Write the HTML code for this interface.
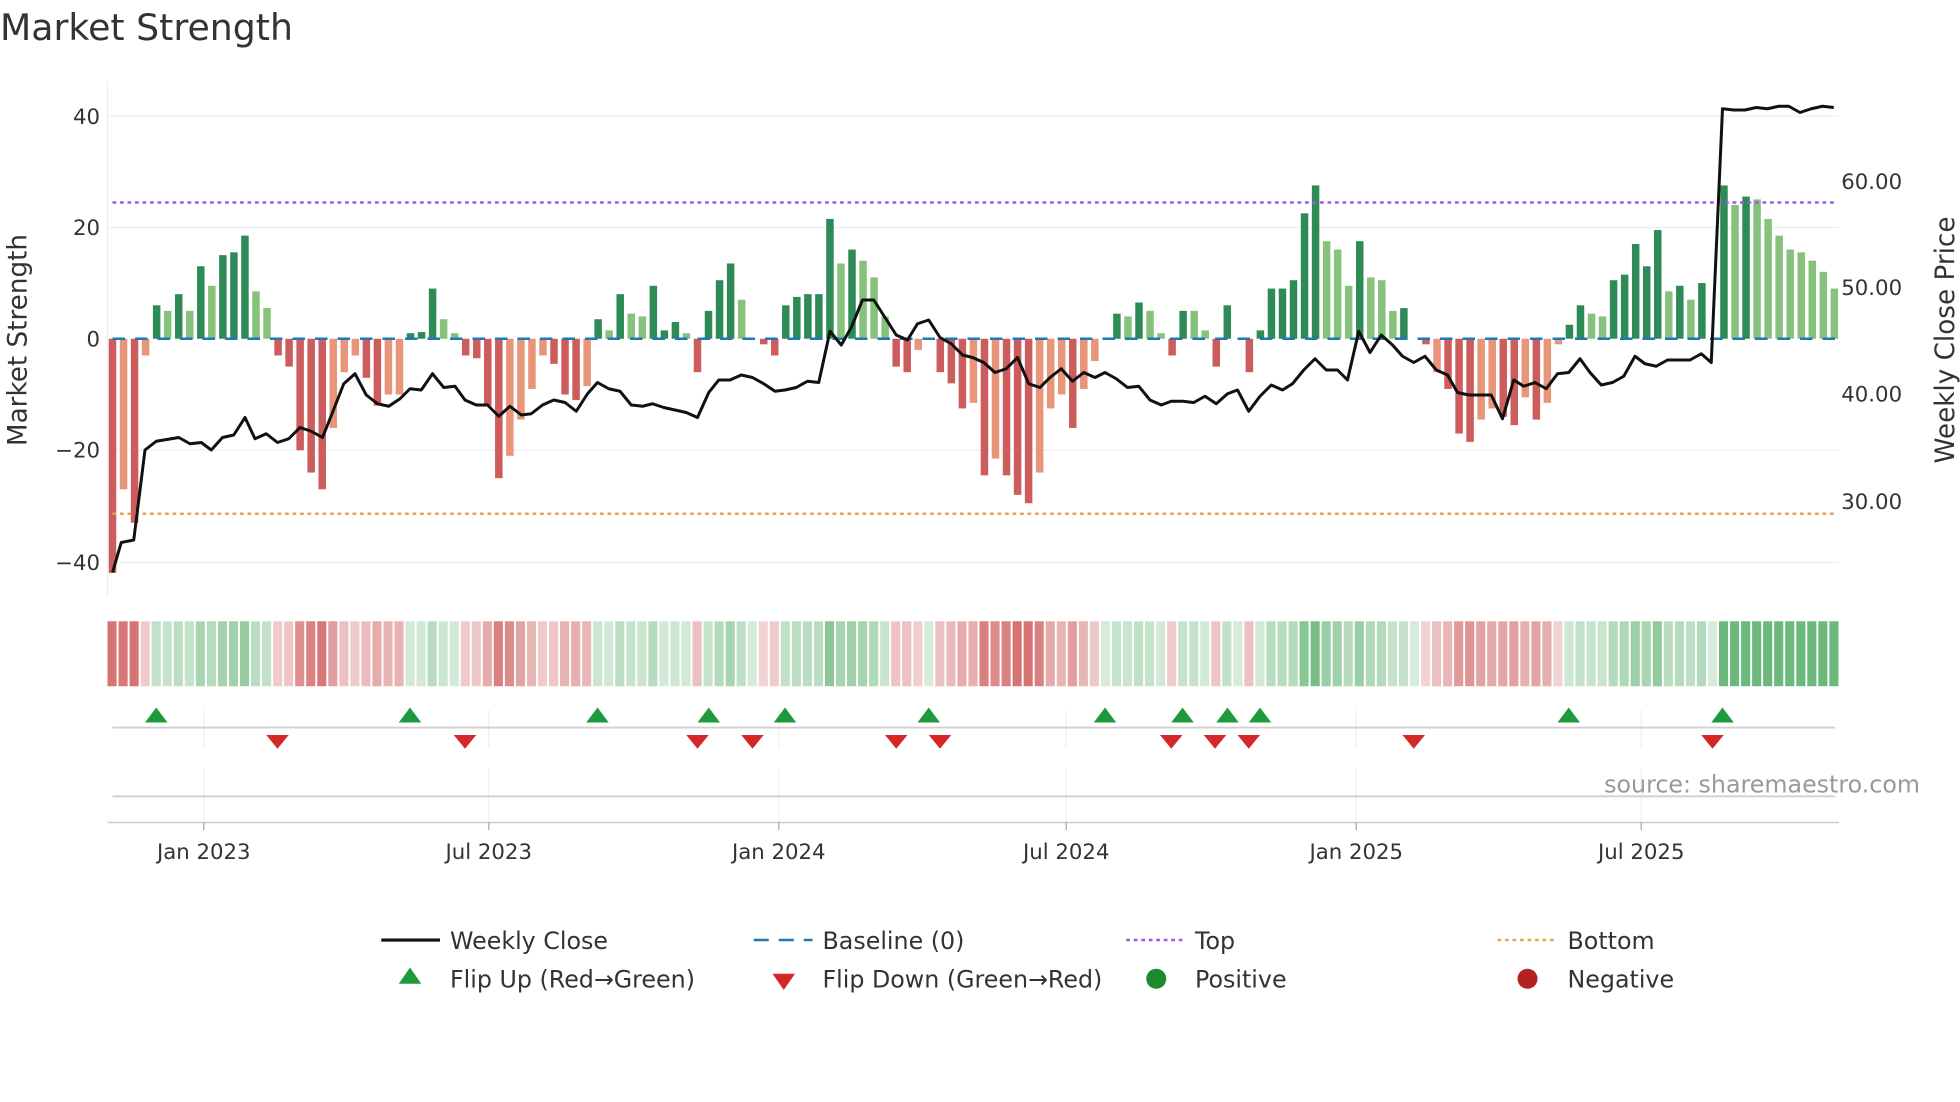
<!DOCTYPE html>
<html><head><meta charset="utf-8"><style>
html,body{margin:0;padding:0;background:#fff;}
svg{display:block;font-family:"DejaVu Sans","Liberation Sans",sans-serif;}
</style></head><body>
<svg id="s" width="1960" height="1102" viewBox="0 0 1568 881.6" xmlns="http://www.w3.org/2000/svg">
<rect width="1568" height="882" fill="#fff"/>
<text x="0" y="32" font-size="29" fill="#333">Market Strength</text>
<g stroke="#eceff2" stroke-width="1">
<line x1="86" x2="1471" y1="93" y2="93"/><line x1="86" x2="1471" y1="182" y2="182"/>
<line x1="86" x2="1471" y1="360" y2="360"/><line x1="86" x2="1471" y1="450" y2="450"/>
<line x1="86" x2="86" y1="65" y2="478"/>
</g>
<g font-size="17" fill="#333" text-anchor="end">
<text x="80" y="99">40</text><text x="80" y="188">20</text><text x="80" y="277">0</text>
<text x="80" y="366">−20</text><text x="80" y="456">−40</text>
</g>
<g font-size="17" fill="#333">
<text x="1473" y="151">60.00</text><text x="1473" y="236">50.00</text>
<text x="1473" y="321">40.00</text><text x="1473" y="407">30.00</text>
</g>
<text transform="translate(21,272) rotate(-90)" font-size="21" fill="#333" text-anchor="middle">Market Strength</text>
<text transform="translate(1563,272) rotate(-90)" font-size="21" fill="#333" text-anchor="middle">Weekly Close Price</text>
<g id="bars"></g>
<line x1="90" x2="1470" y1="271" y2="271" stroke="#1f77b4" stroke-width="2" stroke-dasharray="10,8"/>
<line x1="90" x2="1470" y1="162" y2="162" stroke="#9b5de5" stroke-width="2" stroke-dasharray="3,3"/>
<line x1="90" x2="1470" y1="411" y2="411" stroke="#f0a050" stroke-width="2" stroke-dasharray="3,3"/>
<polyline id="price" fill="none" stroke="#111" stroke-width="2.4" stroke-linejoin="round"/>
<g id="strip"></g>
<g stroke="#eef0f2" stroke-width="1">
<line x1="163" x2="163" y1="568" y2="598"/><line x1="391" x2="391" y1="568" y2="598"/>
<line x1="623" x2="623" y1="568" y2="598"/><line x1="853" x2="853" y1="568" y2="598"/>
<line x1="1085" x2="1085" y1="568" y2="598"/><line x1="1313" x2="1313" y1="568" y2="598"/>
<line x1="163" x2="163" y1="615" y2="658"/><line x1="391" x2="391" y1="615" y2="658"/>
<line x1="623" x2="623" y1="615" y2="658"/><line x1="853" x2="853" y1="615" y2="658"/>
<line x1="1085" x2="1085" y1="615" y2="658"/><line x1="1313" x2="1313" y1="615" y2="658"/>
</g>
<line x1="90" x2="1468" y1="582" y2="582" stroke="#d0d0d0" stroke-width="1.5"/>
<line x1="90" x2="1468" y1="637" y2="637" stroke="#d0d0d0" stroke-width="1.5"/>
<line x1="86" x2="1471" y1="658" y2="658" stroke="#ccc" stroke-width="1.2"/>
<g id="flips"></g>
<text x="1536" y="634" font-size="19" fill="#999" text-anchor="end">source: sharemaestro.com</text>
<g stroke="#aaa"><line x1="163" x2="163" y1="658" y2="664"/><line x1="391" x2="391" y1="658" y2="664"/><line x1="623" x2="623" y1="658" y2="664"/><line x1="853" x2="853" y1="658" y2="664"/><line x1="1085" x2="1085" y1="658" y2="664"/><line x1="1313" x2="1313" y1="658" y2="664"/></g>
<g font-size="17" fill="#333" text-anchor="middle">
<text x="163" y="687">Jan 2023</text><text x="391" y="687">Jul 2023</text><text x="623" y="687">Jan 2024</text>
<text x="853" y="687">Jul 2024</text><text x="1085" y="687">Jan 2025</text><text x="1313" y="687">Jul 2025</text>
</g>
<g font-size="19" fill="#333">
<line x1="305" x2="352" y1="752" y2="752" stroke="#111" stroke-width="2.5"/>
<text x="360" y="759">Weekly Close</text>
<line x1="603" x2="650" y1="752" y2="752" stroke="#1f77b4" stroke-width="2" stroke-dasharray="12,8"/>
<text x="658" y="759">Baseline (0)</text>
<line x1="901" x2="946" y1="752" y2="752" stroke="#9b5de5" stroke-width="2" stroke-dasharray="3,3"/>
<text x="956" y="759">Top</text>
<line x1="1198" x2="1244" y1="752" y2="752" stroke="#f0a050" stroke-width="2" stroke-dasharray="3,3"/>
<text x="1254" y="759">Bottom</text>
<polygon points="328,774 319,787 337,787" fill="#1e9a3e"/>
<text x="360" y="790">Flip Up (Red→Green)</text>
<polygon points="618,779 636,779 627,792" fill="#d62728"/>
<text x="658" y="790">Flip Down (Green→Red)</text>
<circle cx="925" cy="783" r="8" fill="#1e8a2e"/>
<text x="956" y="790">Positive</text>
<circle cx="1222" cy="783" r="8" fill="#b22222"/>
<text x="1254" y="790">Negative</text>
</g>
</svg>
<script>
var NS="http://www.w3.org/2000/svg";
var V=[-42,-27,-33,-3,6,5,8,5,13,9.5,15,15.5,18.5,8.5,5.5,-3,-5,-20,-24,-27,-16,-6,-3,-7,-12,-10,-10,1,1.2,9,3.5,1,-3,-3.5,-12,-25,-21,-14.5,-9,-3,-4.5,-10,-11,-8.5,3.5,1.5,8,4.5,4,9.5,1.5,3,1,-6,5,10.5,13.5,7,0,-1,-3,6,7.5,8,8,21.5,13.5,16,14,11,4,-5,-6,-2,0,-6,-8,-12.5,-11.5,-24.5,-21.5,-24.5,-28,-29.5,-24,-12.5,-10,-16,-9,-4,0,4.5,4,6.5,5,1,-3,5,5,1.5,-5,6,0,-6,1.5,9,9,10.5,22.5,27.5,17.5,16,9.5,17.5,11,10.5,5,5.5,0,-1,-6,-9,-17,-18.5,-14.5,-12.5,-14,-15.5,-10.5,-14.5,-11.5,-1,2.5,6,4.5,4,10.5,11.5,17,13,19.5,8.5,9.5,7,10,0,27.5,24,25.5,25,21.5,18.5,16,15.5,14,12,9];
var LT=[1,3,5,7,9,13,14,20,21,22,25,26,30,31,36,37,38,39,43,45,47,48,52,57,66,68,69,70,73,78,80,84,85,86,88,89,92,94,95,98,99,110,111,112,114,115,116,120,124,125,128,130,131,134,135,141,143,147,149,150,151,152,153,154,155,156];
function el(t,a,p){var e=document.createElementNS(NS,t);for(var k in a)e.setAttribute(k,a[k]);p.appendChild(e);return e;}
var bars=document.getElementById("bars"),strip=document.getElementById("strip");
for(var i=0;i<V.length;i++){var x=90+i*8.83,v=V[i],lt=LT.indexOf(i)>=0;
 var c=v>=0?(lt?"#86c27c":"#2e8b57"):(lt?"#e8957a":"#cd5c5c");
 if(v!==0){var y=271-v*4.46;el("rect",{x:x-3,y:Math.min(y,271),width:6,height:Math.abs(v*4.46),fill:c},bars);}
 var a=Math.min(1,0.3+Math.abs(v)/40);var sc=v>=0?"rgba(60,160,80,"+(a*0.7)+")":"rgba(200,70,70,"+(a*0.75)+")";
 if(i>=146) sc="rgba(60,160,80,0.75)";
 el("rect",{x:86+i*8.83,y:497,width:7.3,height:52,fill:sc},strip);}
var P=[[90,458],[97,434],[107,432],[116,360],[125,353],[143,350],[152,355],[161,354],[169,360],[178,350],[187,348],[196,334],[204,351],[213,347],[222,354],[231,351],[240,342],[249,345],[258,350],[266,330],[275,307],[284,299],[293,316],[302,323],[311,325],[320,319],[328,311],[337,312],[346,299],[355,310],[364,309],[372,320],[381,324],[390,324],[399,333],[408,325],[417,332],[425,331],[434,324],[443,320],[452,322],[461,329],[470,315],[478,306],[487,311],[496,313],[505,324],[514,325],[522,323],[531,326],[540,328],[549,330],[558,334],[567,314],[575,304],[584,304],[593,300],[602,302],[611,307],[620,313],[628,312],[637,310],[646,305],[655,306],[664,265],[673,276],[681,262],[690,240],[699,240],[708,254],[717,268],[726,272],[734,259],[743,256],[752,270],[761,275],[770,284],[778,286],[787,290],[796,298],[805,295],[814,286],[823,307],[832,310],[840,302],[849,295],[858,305],[867,298],[876,302],[884,298],[893,303],[902,310],[911,309],[920,320],[929,324],[937,321],[946,321],[955,322],[964,317],[973,323],[982,315],[990,312],[999,329],[1008,317],[1017,308],[1026,312],[1034,307],[1043,296],[1052,287],[1061,296],[1070,296],[1078,304],[1087,265],[1096,282],[1105,268],[1114,276],[1122,285],[1131,290],[1140,285],[1149,296],[1158,300],[1166,314],[1175,316],[1184,316],[1193,316],[1202,335],[1211,304],[1219,309],[1228,306],[1237,311],[1246,299],[1255,298],[1264,287],[1272,298],[1281,308],[1290,306],[1299,301],[1308,285],[1316,291],[1325,293],[1334,288],[1343,288],[1352,288],[1361,283],[1369,290],[1378,87],[1387,88],[1396,88],[1405,86],[1414,87],[1423,85],[1431,85],[1440,90],[1449,87],[1458,85],[1467,86]];
document.getElementById("price").setAttribute("points",P.map(function(p){return p.join(",")}).join(" "));
var f=document.getElementById("flips");
[125,328,478,567,628,743,884,946,982,1008,1255,1378].forEach(function(x){el("polygon",{points:x+",566 "+(x-9)+",578 "+(x+9)+",578",fill:"#1e9a3e"},f);});
[222,372,558,602,717,752,937,972,999,1131,1370].forEach(function(x){el("polygon",{points:(x-9)+",588 "+(x+9)+",588 "+x+",599",fill:"#d62728"},f);});
</script>
</body></html>
